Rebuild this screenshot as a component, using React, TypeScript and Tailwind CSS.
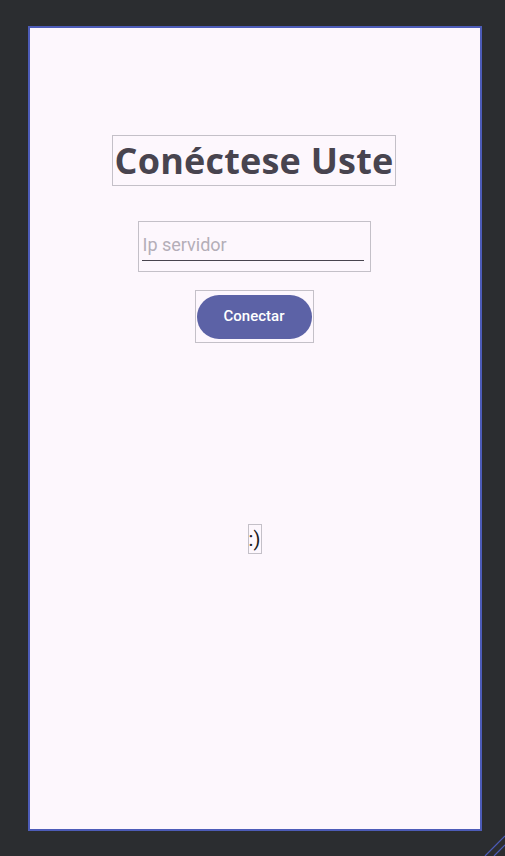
export default function App() {
  return (
    <div className="relative h-[856px] w-[505px] overflow-hidden bg-[#2b2d30] pl-[28px] pt-[26px]">
      {/* DEVICE FRAME */}
      <div className="flex h-[805px] w-[454px] flex-col items-center border-2 border-[#4d5cb8] bg-[#fdf7fd] pr-[2px] pt-[107px]">
        {/* TITLE */}
        <div className="flex h-[51px] w-[284px] items-center justify-center overflow-hidden border border-[#c4c0c8]">
          <span className="whitespace-nowrap pt-[1px] text-[36px] font-bold leading-none tracking-[0.2px] text-[#48444f] [font-family:'Open_Sans',sans-serif]">
            Conéctese Uste
          </span>
        </div>

        {/* INPUT */}
        <div className="mt-[35px] flex h-[51px] w-[233px] flex-col border border-[#c4c0c8] px-[3px] pt-[12px]">
          <span className="pl-[1px] text-[18px] leading-[22px] text-[#b4aeb8] [font-family:Roboto,sans-serif]">
            Ip servidor
          </span>
          <div className="mt-[4px] h-px w-[222px] bg-[#49454f]" />
        </div>

        {/* BUTTON */}
        <div className="mt-[18px] flex h-[53px] w-[119px] items-center border border-[#c4c0c8] pl-[1px]">
          <div className="flex h-[44px] w-[115px] items-center justify-center rounded-full bg-[#5c62a6] text-[15px] font-medium text-white [font-family:Roboto,sans-serif]">
            Conectar
          </div>
        </div>

        {/* SMILEY */}
        <div className="ml-[1px] mt-[181px] flex h-[30px] w-[14px] items-center justify-center border border-[#c4c0c8] text-[20px] leading-none text-[#1d1b20] [font-family:Roboto,sans-serif]">
          :)
        </div>
      </div>

      {/* RESIZE HANDLE */}
      <svg className="absolute bottom-0 right-0" width="24" height="24" viewBox="0 0 24 24">
        <line x1="4" y1="24" x2="24" y2="4" stroke="#4d5cb8" strokeWidth="1.2" />
        <line x1="13" y1="24" x2="24" y2="13" stroke="#4d5cb8" strokeWidth="1.2" />
      </svg>
    </div>
  );
}
